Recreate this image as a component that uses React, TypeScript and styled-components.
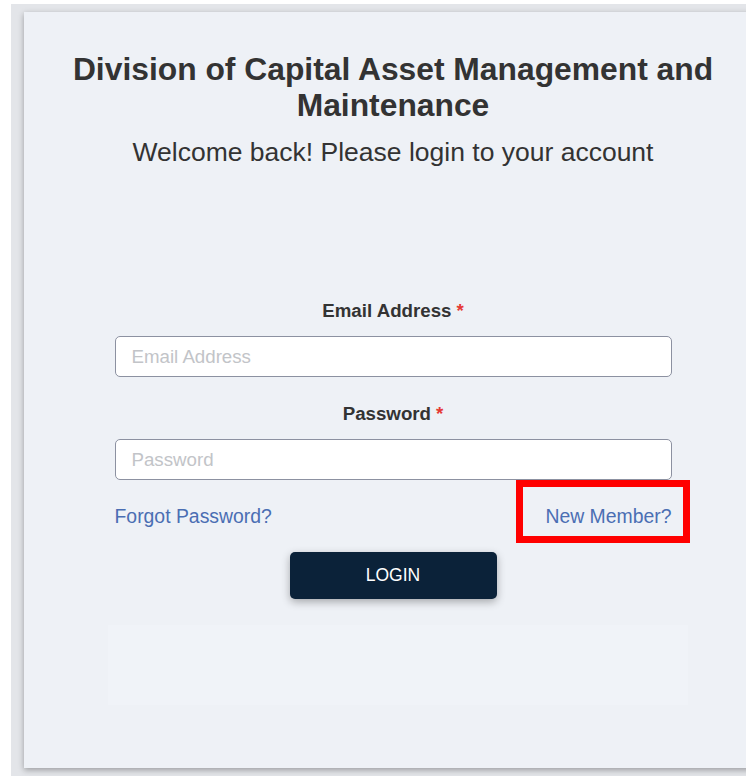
import React from "react"
import styled, { createGlobalStyle } from "styled-components"

const GlobalStyle = createGlobalStyle`
    html, body {
        margin: 0;
        padding: 0;
        background: #ffffff;
        overflow: hidden;
    }
    body {
        font-family: "Liberation Sans", Arial, sans-serif;
    }
`

const Frame = styled.div`
    margin: 4px 0 0 11px;
    padding: 8px 0 0 13px;
    height: 772px;
    background-color: #e3e5e9;
    box-sizing: border-box;
`

const Card = styled.div`
    width: 738px;
    height: 756px;
    background-color: #eef1f6;
    box-shadow: 0 2px 6px rgba(0, 0, 0, 0.32);
    padding-top: 39px;
    box-sizing: border-box;
    display: flex;
    flex-direction: column;
    align-items: center;
    color: #333333;
`

const Title = styled.h1`
    margin: 0;
    width: 660px;
    font-size: 31.8px;
    line-height: 36px;
    font-weight: 700;
    text-align: center;
    color: #333333;
`

const Subtitle = styled.p`
    margin: 14px 0 0;
    font-size: 26.5px;
    line-height: 30px;
    text-align: center;
    color: #333333;
`

const Form = styled.form`
    margin-top: 133px;
    width: 557px;
    display: flex;
    flex-direction: column;
`

const Field = styled.div<{ gap?: number }>`
    display: flex;
    flex-direction: column;
    margin-top: ${props => props.gap ?? 0}px;
`

const Label = styled.label`
    font-size: 18.7px;
    line-height: 22px;
    font-weight: 700;
    text-align: center;
    color: #333333;
    margin-bottom: 14px;
    & > span {
        color: #e53935;
        margin-left: 5px;
    }
`

const Input = styled.input`
    height: 41px;
    box-sizing: border-box;
    border: 1px solid #8c91a1;
    border-radius: 5px;
    background: #ffffff;
    padding: 0 16px;
    font-family: "Liberation Sans", Arial, sans-serif;
    font-size: 18.7px;
    color: #333333;
    outline: none;
    &::placeholder {
        color: #c2c4c8;
    }
`

const LinkRow = styled.div`
    margin-top: 25px;
    display: flex;
    justify-content: space-between;
    align-items: center;
`

const TextLink = styled.a`
    font-size: 19.4px;
    line-height: 22px;
    color: #4a6eb3;
    text-decoration: none;
    cursor: pointer;
`

// red outline drawn over the sign-up link
const Marked = styled.span`
    position: relative;
    display: inline-flex;
`

const MarkBox = styled.span`
    position: absolute;
    top: -25px;
    bottom: -16px;
    left: -29px;
    right: -18px;
    border: 7px solid #ff0000;
    pointer-events: none;
`

const LoginButton = styled.button`
    align-self: center;
    margin-top: 25px;
    width: 207px;
    height: 47px;
    border: none;
    border-radius: 5px;
    background-color: #0b2239;
    color: #ffffff;
    font-family: "Liberation Sans", Arial, sans-serif;
    font-size: 17.5px;
    box-shadow: 0 3px 8px rgba(0, 0, 0, 0.3);
    cursor: pointer;
`

const FooterSlot = styled.div`
    margin: 26px 0 0 10px;
    width: 580px;
    height: 80px;
    background-color: #f0f3f8;
`

export default function App() {
    return (
        <>
            <GlobalStyle />
            <Frame>
                <Card>
                    <Title>Division of Capital Asset Management and Maintenance</Title>
                    <Subtitle>Welcome back! Please login to your account</Subtitle>
                    <Form onSubmit={e => e.preventDefault()}>
                        <Field>
                            <Label htmlFor="email">Email Address<span>*</span></Label>
                            <Input id="email" type="email" placeholder="Email Address" />
                        </Field>
                        <Field gap={26}>
                            <Label htmlFor="password">Password<span>*</span></Label>
                            <Input id="password" type="password" placeholder="Password" />
                        </Field>
                        <LinkRow>
                            <TextLink>Forgot Password?</TextLink>
                            <Marked>
                                <TextLink>New Member?</TextLink>
                                <MarkBox />
                            </Marked>
                        </LinkRow>
                        <LoginButton type="submit">LOGIN</LoginButton>
                    </Form>
                    <FooterSlot />
                </Card>
            </Frame>
        </>
    )
}
